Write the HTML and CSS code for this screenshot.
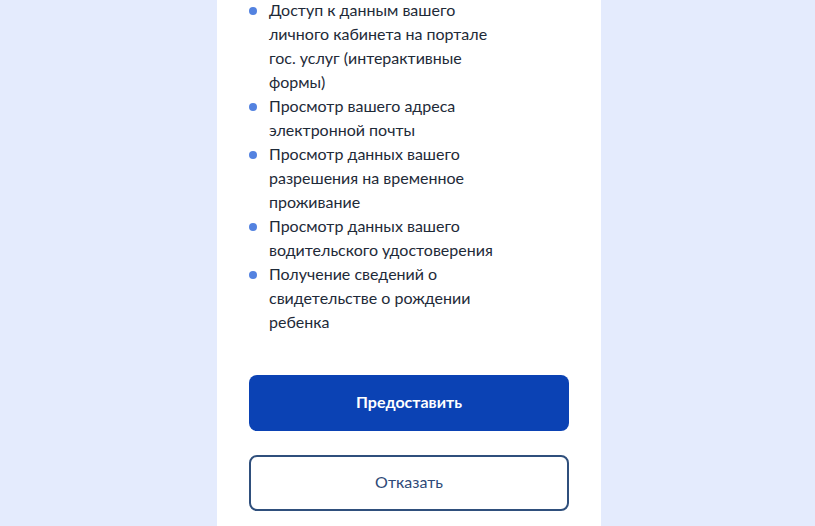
FILE: index.html
```html
<!DOCTYPE html>
<html lang="ru">
<head>
<meta charset="utf-8">
<link rel="stylesheet" href="styles.css">
</head>
<body>
<div class="page">
  <div class="card">
    <ul class="perms">
      <li>Доступ к данным вашего личного кабинета на портале гос. услуг (интерактивные формы)</li>
      <li>Просмотр вашего адреса электронной почты</li>
      <li>Просмотр данных вашего разрешения на временное проживание</li>
      <li>Просмотр данных вашего водительского удостоверения</li>
      <li>Получение сведений о свидетельстве о рождении ребенка</li>
    </ul>
    <div class="actions">
      <button class="btn btn-primary">Предоставить</button>
      <button class="btn btn-secondary">Отказать</button>
    </div>
  </div>
</div>
</body>
</html>
```
FILE: styles.css
```css
html, body {
  margin: 0;
  padding: 0;
  height: 100%;
}
body {
  background: #e4ebfd;
  font-family: Lato, "Noto Sans", sans-serif;
  color: #1f2a3a;
  overflow: hidden;
}
.page {
  display: flex;
  justify-content: center;
  padding-left: 3px;
  height: 100%;
}
.card {
  width: 320px;
  background: #ffffff;
  padding: 0 32px;
  height: 100%;
}
.perms {
  list-style: none;
  margin: -2px 0 0 0;
  padding: 0;
  width: 254px;
}
.perms li {
  position: relative;
  padding-left: 20px;
  font-size: 16px;
  line-height: 24px;
  color: #1e2a38;
}
.perms li::before {
  content: "";
  position: absolute;
  left: 0;
  top: 9px;
  width: 8px;
  height: 8px;
  border-radius: 50%;
  background: #5382e0;
}
.actions {
  display: flex;
  flex-direction: column;
  gap: 24px;
  margin-top: 41px;
}
.btn {
  width: 320px;
  height: 56px;
  padding: 0 0 3px 0;
  border-radius: 8px;
  font-family: Lato, "Noto Sans", sans-serif;
  font-size: 16px;
  cursor: pointer;
}
.btn-primary {
  background: #0b42b4;
  color: #ffffff;
  border: none;
  font-weight: 700;
}
.btn-secondary {
  background: #ffffff;
  color: #2f4a78;
  border: 2px solid #2f4f7c;
  font-weight: 400;
}
```
